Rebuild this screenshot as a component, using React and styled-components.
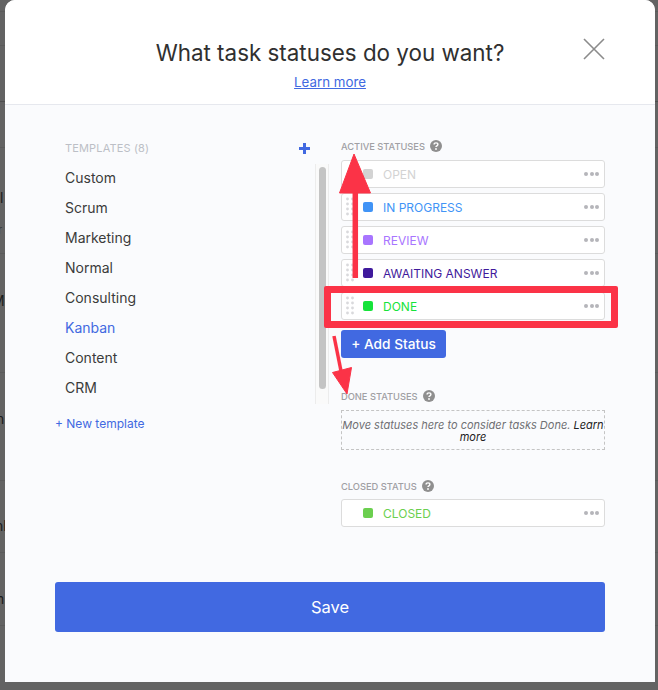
import React from "react";
import styled, { createGlobalStyle } from "styled-components";

const templates = ["Custom", "Scrum", "Marketing", "Normal", "Consulting", "Kanban", "Content", "CRM"];

const activeStatuses = [
  { name: "OPEN", color: "#d3d3d3" },
  { name: "IN PROGRESS", color: "#4194f6" },
  { name: "REVIEW", color: "#a875ff" },
  { name: "AWAITING ANSWER", color: "#3f1a9c" },
  { name: "DONE", color: "#16e33a" },
];

// page behind the dimmed overlay, only a sliver of it shows
const backdropLines = [11, 45, 147, 253, 372, 480, 552, 625];
const backdropText = [
  { text: "l", top: 189, left: 0 },
  { text: "r", top: 222, left: -2, small: true },
  { text: "M", top: 292, left: -8 },
  { text: "n", top: 410, left: -4 },
  { text: "nl", top: 517, left: -5 },
  { text: "m", top: 590, left: -8 },
];

const HelpIcon = () => (
  <svg width="12" height="12" viewBox="0 0 12 12">
    <circle cx="6" cy="6" r="6" fill="#8f8f8f" />
    <path d="M4.1 4.6c0-1.1.9-1.7 1.9-1.7s1.900.6 1.900 1.600c0 1.400-1.900 1.300-1.900 2.600" fill="none" stroke="#fff" strokeWidth="1.4" />
    <circle cx="6" cy="9" r=".9" fill="#fff" />
  </svg>
);

const Grip = () => (
  <svg width="8" height="20" viewBox="0 0 8 20">
    {[2, 7, 12, 17].map((y) => (
      <g key={y} fill="#d9d9dc">
        <circle cx="1.5" cy={y} r="1.4" />
        <circle cx="6.5" cy={y} r="1.4" />
      </g>
    ))}
  </svg>
);

const StatusRow = ({ name, color, grip }) => (
  <Styles.Row>
    <Styles.GripSlot>{grip && <Grip />}</Styles.GripSlot>
    <Styles.Swatch $color={color} />
    <Styles.StatusName $color={color}>{name}</Styles.StatusName>
    <Styles.Dots>
      <i />
      <i />
      <i />
    </Styles.Dots>
  </Styles.Row>
);

const App = () => {
  return (
    <>
      <GlobalStyle />
      <Styles.Screen>
        <Styles.Backdrop>
          {backdropLines.map((y) => (
            <Styles.BackLine key={y} $top={y} />
          ))}
          <Styles.BackLine $top={101} $dark />
          {backdropText.map((t) => (
            <Styles.BackText key={t.top} $top={t.top} $left={t.left} $small={t.small}>
              {t.text}
            </Styles.BackText>
          ))}
        </Styles.Backdrop>
        <Styles.Modal>
          <Styles.Header>
            <Styles.Title>What task statuses do you want?</Styles.Title>
            <Styles.LearnMore>Learn more</Styles.LearnMore>
            <Styles.Close>
              <svg width="22" height="22" viewBox="0 0 22 22">
                <path d="M1 1l20 20M21 1L1 21" stroke="#8b8b8b" strokeWidth="1.6" fill="none" />
              </svg>
            </Styles.Close>
          </Styles.Header>
          <Styles.Body>
            <Styles.Columns>
              <Styles.Left>
                <Styles.TemplatesHead>
                  <span>TEMPLATES (8)</span>
                  <svg width="11" height="11" viewBox="0 0 11 11">
                    <path d="M5.5 0v11M0 5.5h11" stroke="#4169e1" strokeWidth="3" />
                  </svg>
                </Styles.TemplatesHead>
                <Styles.ListWrap>
                  <Styles.List>
                    {templates.map((t) => (
                      <Styles.Item key={t} $active={t === "Kanban"}>
                        {t}
                      </Styles.Item>
                    ))}
                  </Styles.List>
                  <Styles.Track>
                    <Styles.Thumb />
                  </Styles.Track>
                </Styles.ListWrap>
                <Styles.NewTemplate>+ New template</Styles.NewTemplate>
              </Styles.Left>
              <Styles.Right>
                <Styles.Label>
                  ACTIVE STATUSES <HelpIcon />
                </Styles.Label>
                <Styles.Rows>
                  {activeStatuses.map((s, i) => (
                    <StatusRow key={s.name} {...s} grip={i > 0} />
                  ))}
                </Styles.Rows>
                <Styles.AddStatus>+ Add Status</Styles.AddStatus>
                <Styles.Label $mt={31}>
                  DONE STATUSES <HelpIcon />
                </Styles.Label>
                <Styles.DropZone>
                  Move statuses here to consider tasks Done. <b>Learn more</b>
                </Styles.DropZone>
                <Styles.Label $mt={29} $mb={6}>
                  CLOSED STATUS <HelpIcon />
                </Styles.Label>
                <StatusRow name="CLOSED" color="#6bcf4f" />
              </Styles.Right>
            </Styles.Columns>
            <Styles.Save>Save</Styles.Save>
          </Styles.Body>
        </Styles.Modal>

        {/* red annotations drawn over the screenshot */}
        <Styles.Highlight />
        <Styles.Arrows width="658" height="690" viewBox="0 0 658 690">
          <g fill="#fb3347" stroke="#fb3347" strokeLinejoin="round">
            <path d="M355.300 278V190" strokeWidth="5.500" fill="none" />
            <path d="M339.500 193L354 154L370.500 193Z" strokeWidth="1" />
            <path d="M334 336L342 376" strokeWidth="3.500" fill="none" />
            <path d="M332.500 372.500L351.500 367.500L347 394Z" strokeWidth="1" />
          </g>
        </Styles.Arrows>
      </Styles.Screen>
    </>
  );
};

const GlobalStyle = createGlobalStyle`
  html, body {
    margin: 0;
    padding: 0;
    background: #636363;
  }
  body {
    font-family: Inter, "Liberation Sans", sans-serif;
  }
`;

// styled
const Styles = {
  Screen: styled.div`
    position: relative;
    width: 658px;
    height: 690px;
    overflow: hidden;
    background: #636363;
    padding: 0 3px 8px 5px;
    box-sizing: border-box;
  `,
  Backdrop: styled.div`
    position: absolute;
    inset: 0;
  `,
  BackLine: styled.div`
    position: absolute;
    left: 0;
    right: 0;
    top: ${(p) => p.$top}px;
    height: 1px;
    background: ${(p) => (p.$dark ? "#4f4f4f" : "#5b5b5b")};
  `,
  BackText: styled.span`
    position: absolute;
    top: ${(p) => p.$top}px;
    left: ${(p) => p.$left}px;
    font-size: ${(p) => (p.$small ? "11px" : "14px")};
    line-height: 17px;
    color: ${(p) => (p.$small ? "#3c3c3c" : "#1c1c1c")};
  `,
  Modal: styled.div`
    position: relative;
    height: 100%;
    display: flex;
    flex-direction: column;
    background: #fafbfd;
    border-radius: 10px 10px 0 0;
    overflow: hidden;
  `,
  Header: styled.div`
    position: relative;
    flex: none;
    height: 66px;
    background: #fff;
    border-bottom: 1px solid #e6e8ee;
    display: flex;
    flex-direction: column;
    align-items: center;
    padding-top: 38px;
  `,
  Title: styled.h1`
    margin: 0;
    font-size: 22.400px;
    line-height: 30px;
    font-weight: 400;
    color: #303030;
  `,
  LearnMore: styled.a`
    margin-top: 6px;
    font-size: 13.300px;
    line-height: 17px;
    color: #4169e1;
    text-decoration: underline;
  `,
  Close: styled.div`
    position: absolute;
    top: 38px;
    right: 50px;
    line-height: 0;
  `,
  Body: styled.div`
    flex: 1;
    display: flex;
    flex-direction: column;
    padding: 35px 50px 50px;
  `,
  Columns: styled.div`
    flex: 1;
    display: flex;
  `,
  Left: styled.div`
    width: 274px;
    flex: none;
  `,
  TemplatesHead: styled.div`
    display: flex;
    justify-content: space-between;
    align-items: center;
    padding: 0 19px 0 10px;
    height: 16px;
    font-size: 11px;
    letter-spacing: 0.15px;
    color: #bcbfc6;
  `,
  ListWrap: styled.div`
    display: flex;
    justify-content: space-between;
    margin-top: 8px;
    height: 240px;
  `,
  List: styled.ul`
    list-style: none;
    margin: -1px 0 0;
    padding: 0 0 0 10px;
  `,
  Item: styled.li`
    height: 30px;
    font-size: 14px;
    line-height: 30px;
    color: ${(p) => (p.$active ? "#4169e1" : "#3b3b3b")};
  `,
  Track: styled.div`
    width: 14px;
    box-sizing: border-box;
    border-left: 1px solid #ececec;
    border-right: 1px solid #ececec;
    background: #fafafa;
    padding: 3px 2px 15px 3px;
  `,
  Thumb: styled.div`
    height: 100%;
    background: #c4c4c4;
    border-radius: 4px;
  `,
  NewTemplate: styled.a`
    display: block;
    margin-top: 12px;
    font-size: 12px;
    line-height: 16px;
    color: #4169e1;
  `,
  Right: styled.div`
    margin: -1px 0 0 12px;
    width: 264px;
    flex: none;
  `,
  Label: styled.div`
    display: flex;
    align-items: center;
    gap: 5px;
    height: 14px;
    margin-top: ${(p) => p.$mt || 0}px;
    margin-bottom: ${(p) => p.$mb || 0}px;
    font-size: 9.300px;
    font-weight: 500;
    color: #a0a0a4;
  `,
  Rows: styled.div`
    display: flex;
    flex-direction: column;
    gap: 5px;
    margin-top: 7px;
  `,
  Row: styled.div`
    display: flex;
    align-items: center;
    height: 28px;
    box-sizing: border-box;
    background: #fff;
    border: 1px solid #dcdcdc;
    border-radius: 3px;
  `,
  GripSlot: styled.div`
    width: 21px;
    flex: none;
    padding-left: 4px;
    box-sizing: border-box;
    line-height: 0;
  `,
  Swatch: styled.span`
    width: 10px;
    height: 10px;
    flex: none;
    border-radius: 2px;
    background: ${(p) => p.$color};
  `,
  StatusName: styled.span`
    margin-left: 10px;
    flex: 1;
    font-size: 12px;
    color: ${(p) => p.$color};
  `,
  Dots: styled.div`
    display: flex;
    gap: 1.500px;
    margin-right: 5px;
    i {
      width: 4px;
      height: 4px;
      border-radius: 50%;
      background: #b5b5ba;
    }
  `,
  AddStatus: styled.button`
    display: block;
    margin-top: 10px;
    width: 105px;
    height: 28px;
    padding: 0;
    border: 0;
    border-radius: 3px;
    background: #4169e1;
    color: #fff;
    font-family: inherit;
    font-size: 13.700px;
    font-weight: 500;
  `,
  DropZone: styled.div`
    box-sizing: border-box;
    height: 40px;
    margin-top: 7px;
    padding-top: 8px;
    border: 1px dashed #c4c4c4;
    font-size: 11px;
    line-height: 12px;
    font-style: italic;
    text-align: center;
    color: #6f6f73;
    b {
      font-weight: 400;
      color: #222;
    }
  `,
  Save: styled.button`
    flex: none;
    height: 50px;
    padding: 0;
    border: 0;
    border-radius: 3px;
    background: #4169e1;
    color: #fff;
    font-family: inherit;
    font-size: 16.500px;
    font-weight: 400;
  `,
  Highlight: styled.div`
    position: absolute;
    left: 324px;
    top: 286px;
    width: 294px;
    height: 42px;
    box-sizing: border-box;
    border: 7px solid #fb3347;
    border-radius: 2px;
  `,
  Arrows: styled.svg`
    position: absolute;
    left: 0;
    top: 0;
    pointer-events: none;
  `,
};

export default App;
